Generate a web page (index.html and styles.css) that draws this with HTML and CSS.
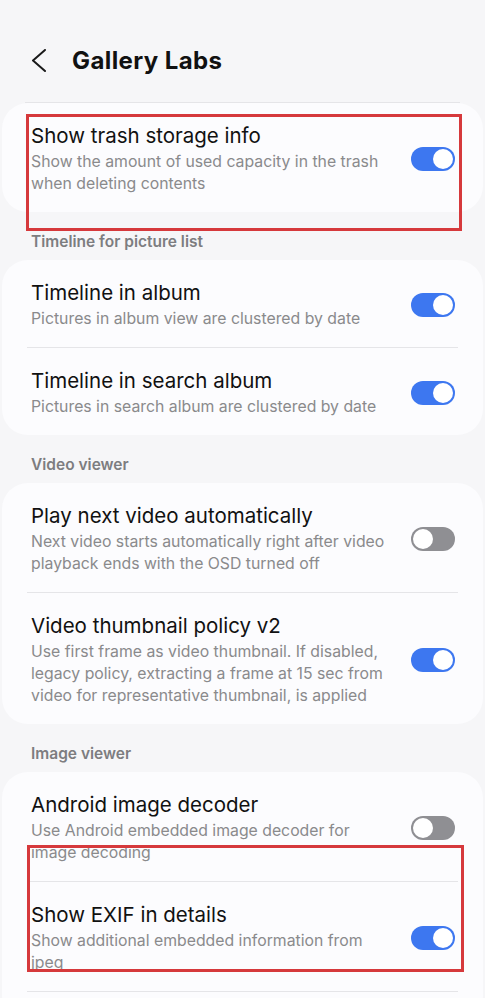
FILE: index.html
```html
<!DOCTYPE html>
<html lang="en">
<head>
    <meta charset="UTF-8">
    <meta name="viewport" content="width=device-width, initial-scale=1.0">
    <title>Gallery Labs</title>
    <link rel="stylesheet" href="styles.css">
</head>
<body>
    <div class="page">
        <header class="app-bar">
            <svg class="back" width="16" height="24" viewBox="0 0 16 24">
                <path d="M14 1 L2 11.5 L14 22" fill="none" stroke="#1a1a1a" stroke-width="2" stroke-linecap="round" stroke-linejoin="round"/>
            </svg>
            <h1 class="title">Gallery Labs</h1>
        </header>

        <div class="top-divider"></div>

        <div class="card">
            <div class="item">
                <div class="text">
                    <div class="item-title">Show trash storage info</div>
                    <div class="item-sub">Show the amount of used capacity in the trash when deleting contents</div>
                </div>
                <span class="switch on"></span>
            </div>
        </div>

        <div class="section">Timeline for picture list</div>
        <div class="card">
            <div class="item">
                <div class="text">
                    <div class="item-title">Timeline in album</div>
                    <div class="item-sub">Pictures in album view are clustered by date</div>
                </div>
                <span class="switch on"></span>
            </div>
            <div class="divider"></div>
            <div class="item">
                <div class="text">
                    <div class="item-title">Timeline in search album</div>
                    <div class="item-sub">Pictures in search album are clustered by date</div>
                </div>
                <span class="switch on"></span>
            </div>
        </div>

        <div class="section">Video viewer</div>
        <div class="card">
            <div class="item">
                <div class="text">
                    <div class="item-title">Play next video automatically</div>
                    <div class="item-sub">Next video starts automatically right after video playback ends with the OSD turned off</div>
                </div>
                <span class="switch"></span>
            </div>
            <div class="divider"></div>
            <div class="item">
                <div class="text">
                    <div class="item-title">Video thumbnail policy v2</div>
                    <div class="item-sub">Use first frame as video thumbnail. If disabled, legacy policy, extracting a frame at 15 sec from video for representative thumbnail, is applied</div>
                </div>
                <span class="switch on"></span>
            </div>
        </div>

        <div class="section">Image viewer</div>
        <div class="card last">
            <div class="item">
                <div class="text">
                    <div class="item-title">Android image decoder</div>
                    <div class="item-sub">Use Android embedded image decoder for image decoding</div>
                </div>
                <span class="switch"></span>
            </div>
            <div class="divider"></div>
            <div class="item">
                <div class="text">
                    <div class="item-title">Show EXIF in details</div>
                    <div class="item-sub">Show additional embedded information from jpeg</div>
                </div>
                <span class="switch on"></span>
            </div>
            <div class="divider"></div>
        </div>

        <!-- red highlight boxes drawn over the screenshot -->
        <div class="mark mark-trash"></div>
        <div class="mark mark-exif"></div>
    </div>
</body>
</html>
```

FILE: styles.css
```css
body {
    margin: 0;
    padding: 0;
    font-family: Inter, Roboto, sans-serif;
    background-color: #f6f6f8;
    color: #111;
    overflow: hidden;
}

.page {
    position: relative;
    width: 485px;
}

.app-bar {
    display: flex;
    align-items: center;
    height: 30px;
    padding: 46px 0 26px 31px;
}

.back {
    margin-right: 25px;
}

.title {
    margin: 0;
    font-size: 24px;
    line-height: 30px;
    font-weight: 700;
    letter-spacing: 0.4px;
    color: #111;
}

.top-divider,
.divider {
    height: 1px;
    margin: 0 25px;
    background-color: #e5e5e8;
}

.card {
    margin: 0 2px;
    background-color: #fcfcfe;
    border-radius: 26px;
}

.card.last {
    padding-bottom: 30px;
}

.item {
    display: flex;
    align-items: center;
    padding: 19px 28px 17px 29px;
}

.text {
    width: 362px;
    margin-right: 20px;
}

.item-title {
    font-size: 20.5px;
    line-height: 27px;
}

.item-sub {
    margin-top: 2px;
    font-size: 15.8px;
    line-height: 22px;
    color: #8a8a8c;
}

.section {
    margin: 20px 0 8px 31px;
    font-size: 15.5px;
    line-height: 20px;
    font-weight: 600;
    color: #7d7d80;
}

.switch {
    position: relative;
    flex: none;
    width: 44px;
    height: 24px;
    border-radius: 12px;
    background-color: #8f8f93;
}

.switch::after {
    content: "";
    position: absolute;
    top: 2px;
    left: 2px;
    width: 20px;
    height: 20px;
    border-radius: 50%;
    background-color: #fff;
}

.switch.on {
    background-color: #3d77f0;
}

.switch.on::after {
    left: 22px;
}

.mark {
    position: absolute;
    border: 3px solid #d6393c;
}

.mark-trash {
    left: 26px;
    top: 114px;
    width: 430px;
    height: 111px;
}

.mark-exif {
    left: 27px;
    top: 845px;
    width: 431px;
    height: 121px;
}
```
